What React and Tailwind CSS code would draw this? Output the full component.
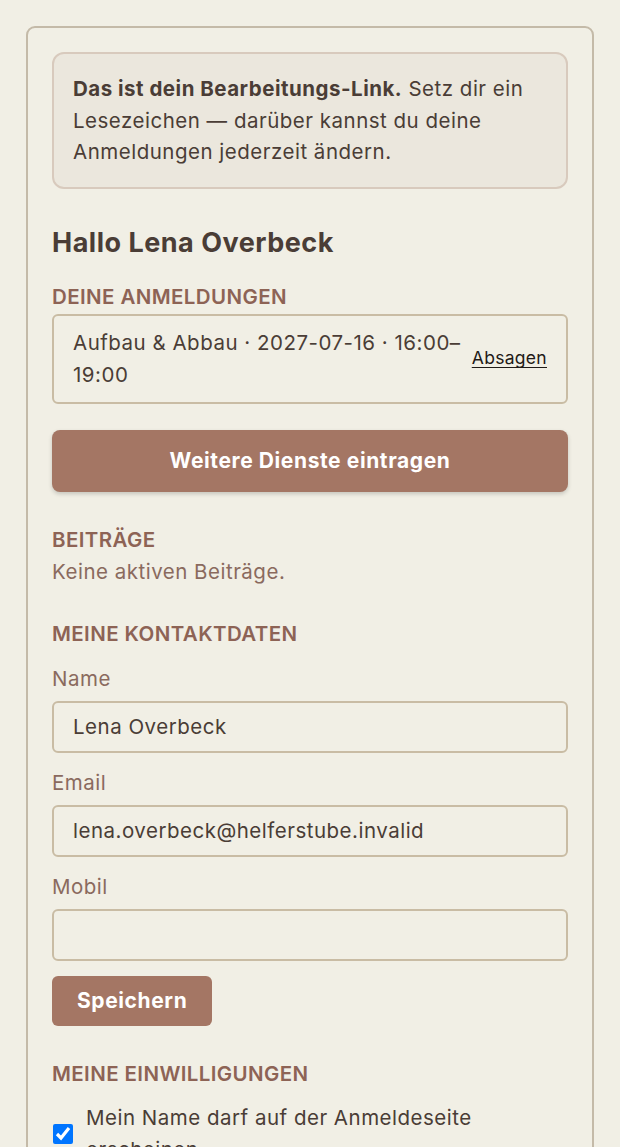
import React from 'react';

const font = { fontFamily: 'Inter, "Noto Sans", sans-serif' };

const Field = ({ label, value }) => (
  <div className="flex flex-col">
    <label className="text-[20.5px] leading-[32px] text-[#8a6a5e] mb-[6px]">{label}</label>
    <input
      type="text"
      defaultValue={value}
      className="h-[52px] w-full rounded-[6px] border-2 border-[#c9bca4] bg-[#f1efe5] px-[19px] text-[20.5px] tracking-[0.5px] text-[#4a3d36] outline-none"
    />
  </div>
);

const SectionTitle = ({ children, className = '' }) => (
  <h3 className={`text-[20.5px] leading-[32px] font-semibold uppercase tracking-[0.4px] text-[#8d6355] ${className}`}>{children}</h3>
);

export default function App() {
  return (
    <div className="min-h-screen bg-[#f1efe5] p-[26px] tracking-[0.5px]" style={font}>
      <div className="rounded-[9px] border-2 border-[#c4baa8] px-[24px] pt-[24px] pb-[40px]">
        <div className="rounded-[12px] border-2 border-[#d8cabd] bg-[#ebe7dd] px-[19px] py-[19px] text-[20.5px] leading-[31.5px] text-[#4a3d36]">
          <strong className="font-bold">Das ist dein Bearbeitungs-Link.</strong> Setz dir ein Lesezeichen — darüber kannst du deine Anmeldungen jederzeit ändern.
        </div>

        <h2 className="mt-[36px] text-[27px] leading-[36px] font-bold text-[#4a3d36]">Hallo Lena Overbeck</h2>

        <SectionTitle className="mt-[20px]">Deine Anmeldungen</SectionTitle>
        <div className="mt-[1px] flex items-center justify-between gap-[8px] rounded-[6px] border-2 border-[#c9bca4] px-[19px] py-[11px]">
          <span className="flex-1 text-[20.5px] leading-[32px] text-[#4a3d36]">Aufbau &amp; Abbau · 2027-07-16 · 16:00–19:00</span>
          <a href="#" className="text-[17.5px] tracking-[0.3px] text-[#1f1a17] underline underline-offset-[3px]">Absagen</a>
        </div>

        <button className="mt-[26px] h-[62px] w-full rounded-[8px] bg-[#a47664] text-[21px] tracking-[0.6px] font-bold text-white shadow-[0_2px_4px_rgba(0,0,0,0.18)]">
          Weitere Dienste eintragen
        </button>

        <SectionTitle className="mt-[32px]">Beiträge</SectionTitle>
        <p className="text-[20.5px] leading-[32px] text-[#8a6a5e]">Keine aktiven Beiträge.</p>

        <SectionTitle className="mt-[30px]">Meine Kontaktdaten</SectionTitle>
        <div className="mt-[13px] flex flex-col gap-[14px]">
          <Field label="Name" value="Lena Overbeck" />
          <Field label="Email" value="lena.overbeck@helferstube.invalid" />
          <Field label="Mobil" value="" />
        </div>

        <button className="mt-[15px] h-[50px] rounded-[6px] bg-[#a47664] px-[25px] text-[21px] tracking-[0.6px] font-bold text-white">
          Speichern
        </button>

        <SectionTitle className="mt-[32px]">Meine Einwilligungen</SectionTitle>
        <label className="mt-[12px] flex items-center gap-[13px] text-[20.5px] leading-[32px] text-[#4a3d36]">
          <input type="checkbox" defaultChecked className="h-[20px] w-[20px] shrink-0 ml-[1px]" />
          <span>Mein Name darf auf der Anmeldeseite erscheinen</span>
        </label>
      </div>
    </div>
  );
}
